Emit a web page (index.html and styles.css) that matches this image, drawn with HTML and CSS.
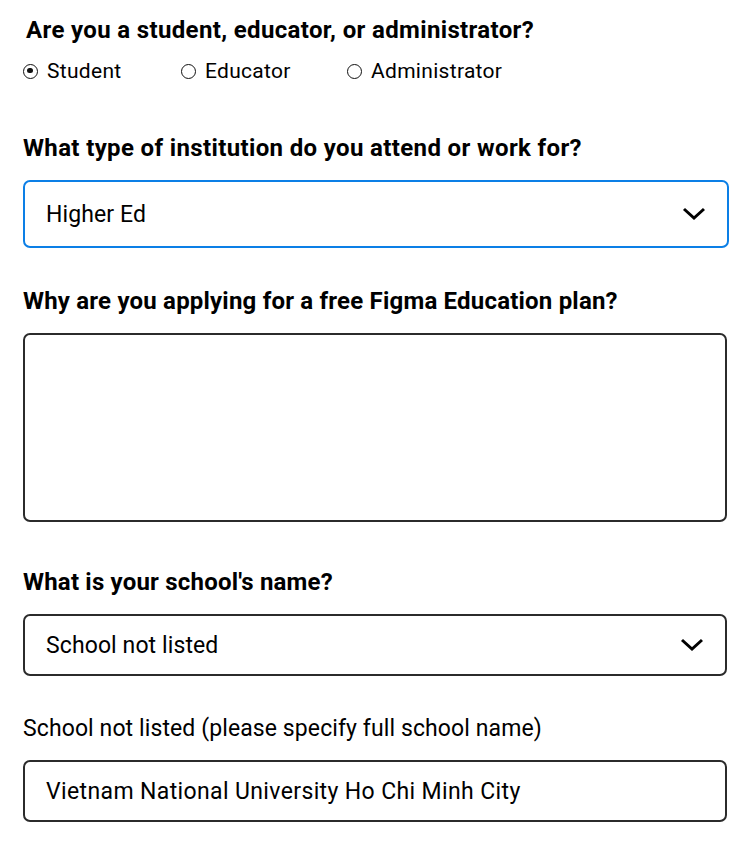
FILE: index.html
```html
<!DOCTYPE html>
<html>
<head>
<meta charset="utf-8">
<link rel="stylesheet" href="styles.css">
</head>
<body>
<form class="form">
  <section class="group group-role">
    <h2 class="q q-role">Are you a student, educator, or administrator?</h2>
    <div class="radios">
      <label class="radio r1"><span class="dot checked"></span>Student</label>
      <label class="radio r2"><span class="dot"></span>Educator</label>
      <label class="radio r3"><span class="dot"></span>Administrator</label>
    </div>
  </section>

  <section class="group group-inst">
    <h2 class="q q-wide">What type of institution do you attend or work for?</h2>
    <div class="field select focused">
      <span class="value">Higher Ed</span>
      <svg class="chev" width="24" height="14" viewBox="0 0 24 14"><path d="M2 2 L12 11 L22 2" fill="none" stroke="#000" stroke-width="3"/></svg>
    </div>
  </section>

  <section class="group group-why">
    <h2 class="q q-tight">Why are you applying for a free Figma Education plan?</h2>
    <div class="field textarea"></div>
  </section>

  <section class="group group-school">
    <h2 class="q q-tight">What is your school's name?</h2>
    <div class="field select short">
      <span class="value">School not listed</span>
      <svg class="chev" width="24" height="14" viewBox="0 0 24 14"><path d="M2 2 L12 11 L22 2" fill="none" stroke="#000" stroke-width="3"/></svg>
    </div>
  </section>

  <section class="group group-other">
    <label class="sub">School not listed (please specify full school name)</label>
    <div class="field input short">
      <span class="value value-wide">Vietnam National University Ho Chi Minh City</span>
    </div>
  </section>
</form>
</body>
</html>
```

FILE: styles.css
```css
html, body {
  margin: 0;
  padding: 0;
  background: #fff;
}
body {
  font-family: Roboto, "Liberation Sans", sans-serif;
  color: #000;
}
.form {
  padding: 15px 0 0 23px;
  width: 706px;
  display: flex;
  flex-direction: column;
}
.q {
  margin: 0;
  font-size: 24px;
  font-weight: 700;
  line-height: 30px;
  letter-spacing: 0.3px;
}
.q-wide { letter-spacing: 0.36px; }
.q-tight { letter-spacing: 0.2px; }
.q-role {
  margin-left: 3px;
  letter-spacing: 0.35px;
}
.radios {
  display: flex;
  margin-top: 13px;
}
.radio {
  display: flex;
  align-items: center;
  font-size: 21px;
  line-height: 26px;
  letter-spacing: 0.3px;
}
.r1 { width: 158px; }
.r2 { width: 166px; }
.dot {
  width: 15px;
  height: 15px;
  border: 1.4px solid #111;
  border-radius: 50%;
  margin-right: 9px;
  box-sizing: border-box;
  position: relative;
  display: inline-block;
}
.dot.checked::after {
  content: "";
  position: absolute;
  left: 3.3px;
  top: 3.3px;
  width: 5.6px;
  height: 5.6px;
  border-radius: 50%;
  background: #111;
}
.group-inst { margin-top: 49px; }
.group-why { margin-top: 38px; }
.group-school { margin-top: 45px; }
.group-other { margin-top: 39px; }
.field {
  box-sizing: border-box;
  border: 2px solid #2b2b2b;
  border-radius: 7px;
  display: flex;
  align-items: center;
  justify-content: space-between;
  padding: 0 21px 0 21px;
  font-size: 23px;
  margin-top: 17px;
}
.field.select { height: 68px; width: 706px; }
.field.focused { border-color: #0c7fe6; }
.field.short { width: 704px; height: 62px; }
.field.textarea { height: 189px; width: 704px; }
.value { letter-spacing: 0.1px; }
.value-wide { letter-spacing: 0.37px; }
.chev { display: block; }
.sub {
  display: block;
  font-size: 23px;
  line-height: 28px;
  letter-spacing: 0.1px;
}
```
